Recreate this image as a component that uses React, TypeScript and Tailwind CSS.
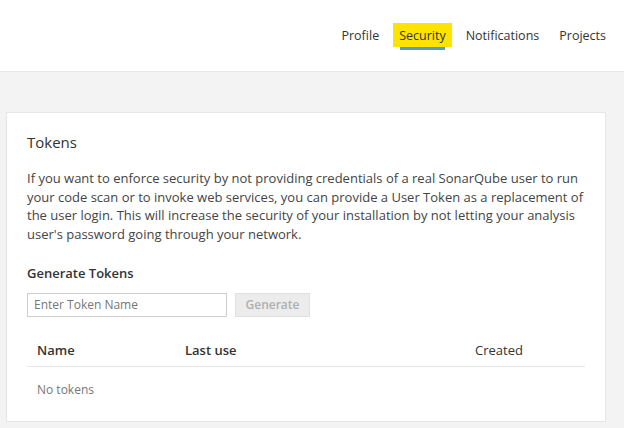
import React from "react";

export default function App() {
  const [tokenName, setTokenName] = React.useState("");
  const tabs = ["Profile", "Security", "Notifications", "Projects"];

  return (
    <div
      className="w-[624px] h-[428px] overflow-hidden bg-[#f3f3f3] text-[#444]"
      style={{ fontFamily: '"Open Sans", "Noto Sans", sans-serif' }}
    >
      {/* Header nav */}
      <header className="h-[72px] bg-white border-b border-[#e6e6e6] flex justify-end items-start pt-[23px] pr-[12px]">
        <nav className="flex items-start gap-[8px] text-[12.5px]">
          {tabs.map((t) => (
            <div key={t} className="flex flex-col items-center">
              <span
                className={
                  t === "Security"
                    ? "h-[24px] px-[6px] pt-[3px] flex items-center bg-[#fce300] text-[#333]"
                    : "h-[24px] px-[6px] pt-[3px] flex items-center text-[#333]"
                }
              >
                {t}
              </span>
              {t === "Security" && <span className="w-[45px] h-[3px] bg-[#4b9fd5]" />}
            </div>
          ))}
        </nav>
      </header>

      {/* Tokens card */}
      <div className="pt-[40px] pl-[6px]">
        <section className="w-[600px] h-[310px] bg-white border border-[#e6e6e6] px-[20px] pt-[19px]">
          <h2 className="text-[15px] leading-[20px] text-[#333]">Tokens</h2>
          <p className="mt-[17px] text-[13px] leading-[18.7px] text-[#444]">
            If you want to enforce security by not providing credentials of a real SonarQube user to run
            your code scan or to invoke web services, you can provide a User Token as a replacement of
            the user login. This will increase the security of your installation by not letting your analysis
            user's password going through your network.
          </p>

          <h3 className="mt-[19px] text-[13px] leading-[20px] font-semibold text-[#333]">Generate Tokens</h3>
          <div className="mt-[10px] flex gap-[8px]">
            <input
              value={tokenName}
              onChange={(e) => setTokenName(e.target.value)}
              placeholder="Enter Token Name"
              className="w-[200px] h-[24px] border border-[#cdcdcd] px-[6px] text-[12px] text-[#444] placeholder:text-[#777] outline-none"
            />
            <button
              disabled
              className="w-[75px] h-[24px] bg-[#ececec] border border-[#e0e0e0] text-[12px] font-semibold text-[#b0b0b0]"
            >
              Generate
            </button>
          </div>

          <table className="mt-[19px] w-[558px] text-[13px]">
            <thead>
              <tr className="border-b border-[#e6e6e6]">
                <th className="w-[148px] h-[31px] pl-[10px] text-left font-semibold text-[#333]">Name</th>
                <th className="w-[290px] pl-[10px] text-left font-semibold text-[#333]">Last use</th>
                <th className="pl-[10px] text-left font-normal text-[#333]">Created</th>
              </tr>
            </thead>
            <tbody>
              <tr>
                <td colSpan={3} className="h-[45px] pl-[10px] text-[12px] text-[#777]">
                  No tokens
                </td>
              </tr>
            </tbody>
          </table>
        </section>
      </div>
    </div>
  );
}
